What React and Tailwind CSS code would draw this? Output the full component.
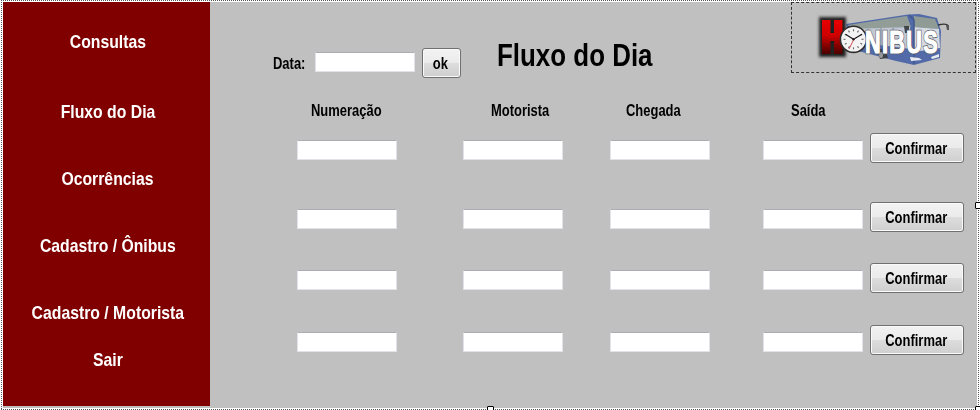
import React from "react";

const menu = [
  ["Consultas", "mt-[28px]"],
  ["Fluxo do Dia", "mt-[46px]"],
  ["Ocorrências", "mt-[43px]"],
  ["Cadastro / Ônibus", "mt-[43px]"],
  ["Cadastro / Motorista", "mt-[43px]"],
  ["Sair", "mt-[23px]"],
];

const rows = ["mt-[12px]", "mt-[39px]", "mt-[31px]", "mt-[32px]"];

function Field({ label, className = "" }) {
  return (
    <input
      aria-label={label}
      className={`block h-5 w-[100px] shrink-0 rounded-[1px] border border-[#e1e3e8] border-t-[#abadb3] bg-white px-1 outline-none ${className}`}
    />
  );
}

function Button({ children, className = "" }) {
  return (
    <button
      className={`flex h-[30px] shrink-0 items-center justify-center rounded-[3px] border border-[#707070] bg-[linear-gradient(#f2f2f2_0%,#ebebeb_49%,#dddddd_50%,#cfcfcf_100%)] text-[16px] leading-none shadow-[inset_0_0_0_1px_#fafafa] ${className}`}
    >
      <span className="block scale-x-[0.81] pt-px">{children}</span>
    </button>
  );
}

function Logo() {
  const ticks = Array.from({ length: 12 }, (_, i) => i * 30);
  const word = {
    x: 865,
    y: 52.5,
    textLength: 74,
    lengthAdjust: "spacingAndGlyphs",
    fontSize: 32,
    fontWeight: 700,
    fontFamily: "'Liberation Sans', sans-serif",
    letterSpacing: 2,
  };
  return (
    <svg width="183" height="69" viewBox="792 3 183 69" className="block">
      <defs>
        <linearGradient id="red" x1="0" y1="0" x2="0" y2="1">
          <stop offset="0" stopColor="#e80000" />
          <stop offset="0.45" stopColor="#d00000" />
          <stop offset="1" stopColor="#4a0000" />
        </linearGradient>
        <filter id="glow" x="-40%" y="-40%" width="180%" height="180%">
          <feGaussianBlur stdDeviation="1.5" />
        </filter>
        <filter id="soft" x="-10%" y="-10%" width="120%" height="120%">
          <feGaussianBlur stdDeviation="0.35" />
        </filter>
      </defs>
      <g filter="url(#soft)">
        <path d="M846 24 L908 14.5 L919 14 L937 18 L941 31 L940 58 L914 65 L896 61 L858 51 L850 40Z" fill="#526ba8" />
        <path d="M848 25 L907 16 L911 27 L852 30Z" fill="#929d98" />
        <path d="M914 16 L935 19 L939 29 L914 27Z" fill="#8f9b94" />
        <path d="M851 29 L910 27 L911 49 L857 42Z" fill="#c3c9d2" />
        <path d="M914 27 L939 29 L940 48 L914 52Z" fill="#d5d9e0" />
        <path d="M909 15 L914 20 L914 64" fill="none" stroke="#40588f" strokeWidth="1.5" />
        <path d="M868 29V43M881 28V46M893 28V49" stroke="#76859e" />
        <path d="M904 26h5v7h-4z" fill="#41444a" />
        <path d="M938 25 Q947 23 948 26 L948 30" fill="none" stroke="#333" strokeWidth="1.3" />
        <path d="M946 25h3v5h-2z" fill="#555" />
        <path d="M877 50 L885 48 L888 58 L880 59Z" fill="#3e4146" />
        <ellipse cx="881" cy="55" rx="2" ry="3" fill="#999" />
        <path d="M910 57 L919 58 L922 60 L911 61Z M931 57l8-3v3l-7 2z" fill="#e8ecf2" />
      </g>
      <path d="M821 19H831V32H834V19H844V55H834V43H831V55H821Z" fill="#000" stroke="#222" strokeWidth="4" filter="url(#glow)" />
      <path d="M822 20H830.5V33H834V20H842.5V54H834V41H830.5V54H822Z" fill="url(#red)" />
      <circle cx="853.5" cy="39.3" r="13.1" fill="#f4f4f4" stroke="#303030" strokeWidth="1.6" />
      {ticks.map((a) => (
        <path key={a} d="M853.5 29.3V31.3" stroke="#666" strokeWidth="1.1" transform={`rotate(${a} 853.5 39.3)`} />
      ))}
      <path d="M845.5 34.3L853.5 39.3L862 34.2" fill="none" stroke="#222" strokeWidth="1.3" />
      <path d="M854.5 38L849 49" stroke="#d33a43" strokeWidth="0.9" />
      <circle cx="853.5" cy="39.3" r="1.2" fill="#222" />
      <text {...word} fill="#fff" stroke="#5b6069" strokeWidth="2.6" paintOrder="stroke" aria-hidden="true">
        <tspan stroke="#5b6069">NIBUS</tspan>
      </text>
      <text {...word} fill="#fff" stroke="#fff" strokeWidth="0.9">
        NIBUS
      </text>
    </svg>
  );
}

function DotsX() {
  return <div className="ml-px h-px w-[978px] bg-[repeating-linear-gradient(90deg,#555_0_1px,#fff_1px_2px)]" />;
}

function DotsY() {
  return <div className="w-px shrink-0 bg-[repeating-linear-gradient(#fff_0_1px,#555_1px_2px)]" />;
}

function Heading({ children, className = "" }) {
  return (
    <div className={className}>
      <span className="inline-block origin-left scale-x-[0.81]">{children}</span>
    </div>
  );
}

export default function App() {
  return (
    <div className="relative flex h-[410px] w-[980px] flex-col overflow-hidden bg-white font-['Liberation_Sans',Arial,sans-serif] font-bold text-black">
      <DotsX />
      <div className="flex h-[408px] pl-px">
        <DotsY />
        <div className="ml-px mt-px flex h-[406px] w-[974px] bg-[#c0c0c0]">
          <nav className="flex h-[404px] w-[207px] shrink-0 flex-col items-center bg-[#800000] pl-[2px] text-[19px] leading-6 text-white">
            {menu.map(([name, gap]) => (
              <a key={name} className={`block scale-x-[0.83] whitespace-nowrap ${gap}`}>
                {name}
              </a>
            ))}
          </nav>
          <main className="flex w-[767px] flex-col">
            <header className="flex h-[71px]">
              <div className="flex h-full w-[581px] items-start pl-[63px]">
                <Heading className="mt-[52px] w-[42px] text-[16px] leading-5">Data:</Heading>
                <Field label="Data" className="mt-[50px]" />
                <Button className="ml-[7px] mt-[46px] w-[39px] pr-[2px]">ok</Button>
                <h1 className="ml-[36px] mt-[35px] origin-left scale-x-[0.81] whitespace-nowrap text-[32px] leading-9">
                  Fluxo do Dia
                </h1>
              </div>
              <div className="h-[71px] w-[185px] shrink-0 border border-dashed border-[#333]">
                <Logo />
              </div>
            </header>
            <div className="mt-[28px] flex h-5 text-[16px] leading-5">
              <Heading className="ml-[101px] w-[180px]">Numeração</Heading>
              <Heading className="w-[135px]">Motorista</Heading>
              <Heading className="w-[165px]">Chegada</Heading>
              <Heading>Saída</Heading>
            </div>
            {rows.map((gap, i) => (
              <div key={i} className={`flex h-[30px] pl-[87px] ${gap}`}>
                <Field label="Numeração" className="mt-[7px]" />
                <Field label="Motorista" className="ml-[66px] mt-[7px]" />
                <Field label="Chegada" className="ml-[47px] mt-[7px]" />
                <Field label="Saída" className="ml-[53px] mt-[7px]" />
                <Button className="ml-[7px] w-[94px] pr-[2px]">Confirmar</Button>
              </div>
            ))}
          </main>
        </div>
        <div className="ml-px flex">
          <DotsY />
        </div>
      </div>
      <DotsX />
      <i className="absolute left-[975px] top-[202px] size-[7px] rounded-[1px] border border-black bg-white" />
      <i className="absolute left-[487px] top-[406px] size-[7px] rounded-[1px] border border-black bg-white" />
      <i className="absolute left-[975px] top-[406px] size-[7px] rounded-[1px] border border-black bg-white" />
    </div>
  );
}
